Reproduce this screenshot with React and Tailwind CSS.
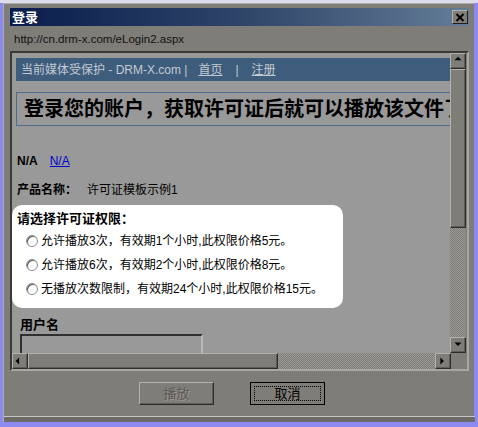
const font = "font-['Liberation_Sans','Noto_Sans_CJK_SC',sans-serif]";

const ScrollButton = ({ dir, className = '' }) => {
  const arrows = {
    up: 'M4 7 L8 3 L12 7 Z',
    down: 'M4 5 L12 5 L8 9 Z',
    left: 'M7 4 L3 8 L7 12 Z',
    right: 'M5 4 L9 8 L5 12 Z',
  };
  return (
    <div
      className={`w-[16px] h-[16px] shrink-0 bg-[#7f7d78] border border-t-[#b3b1ac] border-l-[#b3b1ac] border-r-[#2e2d2b] border-b-[#2e2d2b] shadow-[inset_-1px_-1px_0_#5e5c58] flex items-center justify-center ${className}`}
    >
      <svg width="14" height="14" viewBox="0 0 16 16" className="-m-px">
        <path d={arrows[dir]} fill="#000" />
      </svg>
    </div>
  );
};

const Radio = ({ label }) => (
  <div className="flex items-center h-[16px] ml-[14px]">
    <div className="w-[12px] h-[12px] rounded-full bg-white border border-[#8d8d8d] shadow-[inset_1px_1px_0_#5a5a5a]" />
    <span className="ml-[3px] text-[12px] text-black">{label}</span>
  </div>
);

const App = () => {
  return (
    <div className={`w-[478px] h-[427px] bg-[#8a8af0] border-t-[3px] border-[#dcdcec] pl-[3px] pr-[4px] pb-[5px] overflow-hidden ${font}`}>
      <div className="h-[419px] bg-[#7f7d78] border-l border-t border-[#aeaca7] flex flex-col pl-[6px] pr-[5px] pt-[4px]">
        {/* title bar */}
        <div className="h-[18px] shrink-0 bg-gradient-to-r from-[#0a1c4c] via-[#2f4468] to-[#647d96] flex items-center justify-between pl-[2px] pr-[1px]">
          <span className="text-white font-bold text-[13px] leading-none">登录</span>
          <div className="w-[16px] h-[14px] bg-[#7f7d78] border border-t-[#b3b1ac] border-l-[#b3b1ac] border-r-[#1e1e1e] border-b-[#1e1e1e] flex items-center justify-center">
            <svg width="10" height="9" viewBox="0 0 10 9">
              <path d="M1.5 1 L8.5 8 M8.5 1 L1.5 8" stroke="#000" strokeWidth="2" />
            </svg>
          </div>
        </div>

        {/* address */}
        <div className="h-[25px] shrink-0 flex items-center pl-[4px] pt-[3px] text-[11.5px] text-[#111]">
          http://cn.drm-x.com/eLogin2.aspx
        </div>

        {/* frame */}
        <div className="h-[320px] shrink-0 border-2 border-t-[#3a3936] border-l-[#3a3936] border-r-[#a9a7a2] border-b-[#a9a7a2] flex flex-col">
          <div className="flex h-[300px]">
            <div className="w-[438px] h-[300px] bg-[#999999] overflow-hidden">
              <div className="pl-[4px] pt-[5px]">
                <div className="w-[480px] h-[23px] bg-[#3e5d7d] flex items-center pl-[5px] text-[12px] text-[#c3c9d1] whitespace-nowrap">
                  <span>当前媒体受保护 - DRM-X.com |</span>
                  <span className="ml-[11px] underline">首页</span>
                  <span className="ml-[13px]">|</span>
                  <span className="ml-[13px] underline">注册</span>
                </div>
                <div className="mt-[11px] w-[480px] h-[34px] border border-[#4d6b8a] flex items-center pl-[7px] whitespace-nowrap">
                  <span className="text-[20px] font-bold text-black leading-none">登录您的账户，获取许可证后就可以播放该文件了</span>
                </div>
              </div>

              <div className="mt-[27px] ml-[5px] h-[16px] flex items-center text-[12px]">
                <span className="font-bold text-black">N/A</span>
                <span className="ml-[12px] text-[#0000cc] underline">N/A</span>
              </div>

              <div className="mt-[13px] ml-[5px] h-[16px] flex items-center text-[12px] text-black">
                <span className="font-bold">产品名称：</span>
                <span className="ml-[10px]">许可证模板示例1</span>
              </div>

              <div className="mt-[7px] w-[331px] h-[103px] bg-white rounded-[10px] pt-[6px] flex flex-col gap-[8px]">
                <div className="h-[16px] flex items-center pl-[5px] text-[13px] font-bold text-black">请选择许可证权限：</div>
                <div className="flex flex-col gap-[8px] -mt-[2px]">
                  <Radio label="允许播放3次，有效期1个小时,此权限价格5元。" />
                  <Radio label="允许播放6次，有效期2个小时,此权限价格8元。" />
                  <Radio label="无播放次数限制，有效期24个小时,此权限价格15元。" />
                </div>
              </div>

              <div className="mt-[9px] ml-[8px] h-[16px] flex items-center text-[13px] font-bold text-black">用户名</div>
              <div className="mt-[1px] ml-[8px] w-[183px] h-[22px] border-2 border-t-[#2f2f2f] border-l-[#2f2f2f] border-r-[#b8b8b8] border-b-[#b8b8b8] bg-[#999999]" />
            </div>

            {/* vertical scrollbar */}
            <div className="w-[16px] h-[300px] flex flex-col">
              <ScrollButton dir="up" />
              <div className="h-[159px] bg-[#7f7d78] border border-t-[#b3b1ac] border-l-[#b3b1ac] border-r-[#2e2d2b] border-b-[#2e2d2b] shadow-[inset_-1px_-1px_0_#5e5c58]" />
              <div className="flex-1 bg-[image:repeating-conic-gradient(#9b9a97_0_25%,#7f7d78_0_50%)] bg-[length:2px_2px]" />
              <ScrollButton dir="down" />
            </div>
          </div>

          {/* horizontal scrollbar */}
          <div className="flex h-[16px]">
            <ScrollButton dir="left" />
            <div className="w-[250px] h-[16px] bg-[#7f7d78] border border-t-[#b3b1ac] border-l-[#b3b1ac] border-r-[#2e2d2b] border-b-[#2e2d2b] shadow-[inset_-1px_-1px_0_#5e5c58]" />
            <div className="flex-1 bg-[image:repeating-conic-gradient(#9b9a97_0_25%,#7f7d78_0_50%)] bg-[length:2px_2px]" />
            <ScrollButton dir="right" />
            <div className="w-[16px] h-[16px] bg-[#7f7d78]" />
          </div>
        </div>

        {/* buttons */}
        <div className="h-[45px] shrink-0 flex items-start pt-[11px] pl-[129px] gap-[36px]">
          <button className="w-[75px] h-[23px] bg-[#7f7d78] border border-t-[#b3b1ac] border-l-[#b3b1ac] border-r-[#2e2d2b] border-b-[#2e2d2b] shadow-[inset_-1px_-1px_0_#5e5c58] text-[13px] text-[#5b5955] [text-shadow:1px_1px_0_#9d9b97]">
            播放
          </button>
          <button className="w-[75px] h-[23px] bg-[#7f7d78] border border-black p-[3px]">
            <div className="w-full h-full border border-dotted border-black flex items-center justify-center text-[13px] text-black">
              取消
            </div>
          </button>
        </div>

        {/* bottom edge */}
        <div className="h-[1px] -mx-[6px] bg-[#c9c7c1]" />
        <div className="flex-1 -mx-[6px] bg-[#6d6b67]" />
      </div>
    </div>
  );
};

export default App;
